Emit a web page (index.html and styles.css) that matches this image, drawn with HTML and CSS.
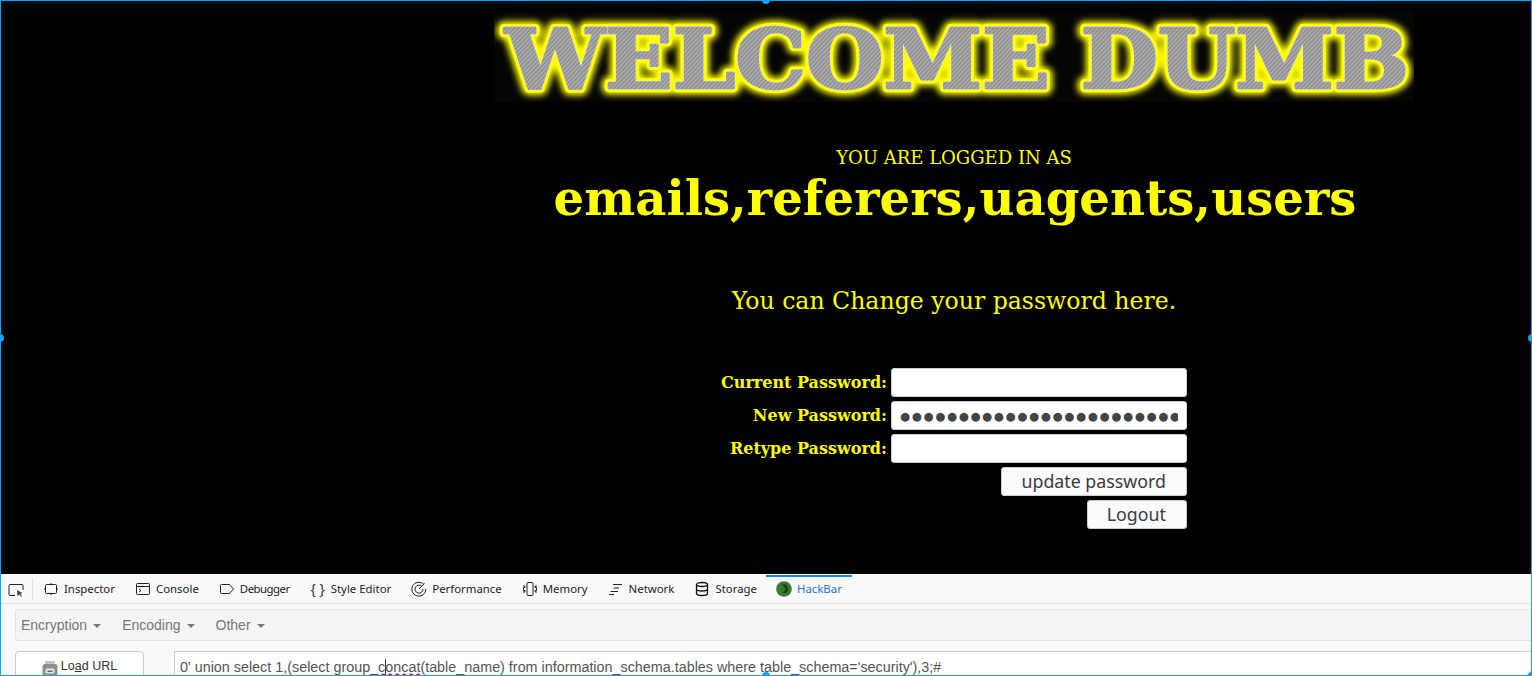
FILE: index.html
```html
<!DOCTYPE html>
<html lang="en">
<head>
<meta charset="UTF-8" />
<meta name="viewport" content="width=device-width, initial-scale=1" />
<title>Less-24 Welcome</title>
<link rel="stylesheet" href="styles.css">
</head>
<body>
<main class="page">
  <div class="content">
    <svg class="banner" width="920" height="110" viewBox="0 0 920 110">
      <defs>
        <pattern id="brushed" width="3" height="3" patternUnits="userSpaceOnUse" patternTransform="rotate(-45)">
          <rect width="3" height="3" fill="#9e9e9e" />
          <rect width="3" height="1" fill="#b2b2b2" />
          <rect y="2" width="3" height="1" fill="#8a8a8a" />
        </pattern>
        <filter id="glow" x="-5%" y="-30%" width="110%" height="160%">
          <feGaussianBlur stdDeviation="3" />
        </filter>
      </defs>
      <rect y="10" width="920" height="90" fill="#050505" />
      <g transform="translate(11 86) scale(1 1.050)">
        <text class="banner-text banner-glow" textLength="904" lengthAdjust="spacingAndGlyphs" filter="url(#glow)">WELCOME DUMB</text>
        <text class="banner-text banner-edge" textLength="904" lengthAdjust="spacingAndGlyphs">WELCOME DUMB</text>
        <text class="banner-text banner-line" textLength="904" lengthAdjust="spacingAndGlyphs">WELCOME DUMB</text>
        <text class="banner-text banner-fill" textLength="904" lengthAdjust="spacingAndGlyphs">WELCOME DUMB</text>
      </g>
    </svg>

    <p class="logged-in">YOU ARE LOGGED IN AS</p>
    <p class="username">emails,referers,uagents,users</p>
    <p class="change-note">You can Change your password here.</p>

    <form class="pass-form">
      <label class="pass-label" for="current">Current Password:</label>
      <input class="pass-input" id="current" type="password">
      <label class="pass-label" for="newpass">New Password:</label>
      <input class="pass-input input-dots" id="newpass" type="text" value="●●●●●●●●●●●●●●●●●●●●●●●●●●●●●●●●●●●●">
      <label class="pass-label" for="retype">Retype Password:</label>
      <input class="pass-input" id="retype" type="password">
      <input class="pass-btn" type="button" value="update password">
      <input class="pass-btn" type="button" value="Logout">
    </form>
  </div>
</main>

<section class="devtools">
  <div class="tabs">
    <span class="picker">
      <svg width="16" height="16" viewBox="0 0 16 16" fill="none" stroke="#222" stroke-width="1">
        <path d="M7 13.500H2a1 1 0 0 1-1-1v-9a1 1 0 0 1 1-1h12a1 1 0 0 1 1 1V8" />
        <path d="M9 8l5.500 3-2.200.8 1.800 2.200-1 .8-1.700-2.200L9.500 14z" fill="#444" stroke="none" />
      </svg>
    </span>
    <span class="tab-sep"></span>
    <span class="tab">
      <svg width="16" height="16" viewBox="0 0 16 16" fill="none" stroke="#222"><rect x="2.500" y="3.500" width="11" height="9" rx="1" /><path d="M1 8h1.500M13.500 8H15M8 2v1.500M8 12.500V14" /></svg>
      Inspector
    </span>
    <span class="tab">
      <svg width="16" height="16" viewBox="0 0 16 16" fill="none" stroke="#222"><rect x="1.500" y="2.500" width="13" height="11" rx="1" /><path d="M1.500 5.500h13M4 8l2 1.500L4 11" /></svg>
      Console
    </span>
    <span class="tab tab-tight">
      <svg width="16" height="16" viewBox="0 0 16 16" fill="none" stroke="#222"><path d="M2.500 3.500h8l4 4.500-4 4.500h-8a1 1 0 0 1-1-1v-7a1 1 0 0 1 1-1z" /></svg>
      Debugger
    </span>
    <span class="tab">
      <span class="braces">{ }</span>
      Style Editor
    </span>
    <span class="tab">
      <svg width="16" height="16" viewBox="0 0 16 16" fill="none" stroke="#222"><path d="M13 3.500A7 7 0 1 0 14.800 8" /><path d="M11 5.500A4 4 0 1 0 12 8" /><path d="M8 8l5.500-5.500" /></svg>
      Performance
    </span>
    <span class="tab">
      <svg width="16" height="16" viewBox="0 0 16 16" fill="none" stroke="#222"><rect x="5" y="1.500" width="6" height="13" rx="1" /><path d="M1 5h2v1.500H1.500v3H3V11H1M15 5h-2v1.500h1.500v3H13V11h2" /></svg>
      Memory
    </span>
    <span class="tab">
      <svg width="16" height="16" viewBox="0 0 16 16" fill="none" stroke="#222"><path d="M5 3.500h9M5.500 7H11M2.500 10.500H10M1 13.500h5" /></svg>
      Network
    </span>
    <span class="tab">
      <svg width="16" height="16" viewBox="0 0 16 16" fill="none" stroke="#111" stroke-width="1.300"><ellipse cx="8" cy="3.500" rx="5.500" ry="2" /><path d="M2.500 3.500v9c0 1.100 2.400 2 5.500 2s5.500-.9 5.500-2v-9M2.500 8c0 1.100 2.400 2 5.500 2s5.500-.9 5.500-2" /></svg>
      Storage
    </span>
    <span class="tab tab-active">
      <svg width="16" height="16" viewBox="0 0 16 16"><circle cx="8" cy="8" r="7.800" fill="#3a7a30" /><path d="M5 4c3.500-2 7 0 7 4s-4 5-6 3c2.500 0 3.500-1.500 3.500-3S7.500 4.500 5 4z" fill="#1b3a14" /></svg>
      HackBar
    </span>
  </div>

  <div class="hackbar">
    <div class="menu-row">
      <span class="menu-item">Encryption</span>
      <span class="menu-item">Encoding</span>
      <span class="menu-item">Other</span>
    </div>
    <div class="url-row">
      <button class="load-btn" type="button">
        <svg class="load-icon" width="16" height="16" viewBox="0 0 16 16"><rect x="3" y="0" width="10" height="5" rx="1" fill="#c4c4c4" /><rect x="0.500" y="3" width="15" height="12" rx="2.500" fill="#8e8e8e" /><rect x="3.500" y="7.500" width="9" height="5" rx="1.500" fill="#e6e6e6" /><rect x="5.500" y="9.500" width="5" height="1.500" fill="#666" /></svg>
        <span>Lo<u>a</u>d URL</span>
      </button>
      <div class="url-box">0' union select 1,(select group_<span class="typo">c<span class="caret"></span>oncat</span>(table_name) from information_schema.tables where table_schema='security'),3;#</div>
    </div>
  </div>
</section>

<div class="frame">
  <span class="handle handle-top"></span>
  <span class="handle handle-left"></span>
  <span class="handle handle-right"></span>
  <span class="handle handle-bottom"></span>
  <span class="corner"></span>
</div>
</body>
</html>
```

FILE: styles.css
```css
html, body {
  margin: 0;
  height: 100%;
  overflow: hidden;
}
body {
  display: flex;
  flex-direction: column;
  background: #000;
  font-family: "DejaVu Serif", serif;
}

/* Page content */
.page {
  height: 574px;
  flex-shrink: 0;
  background: #000;
  color: #ff0;
  overflow: hidden;
}
.content {
  width: 920px;
  margin-left: 494px;
  padding-top: 2px;
  display: flex;
  flex-direction: column;
  align-items: center;
}
.banner {
  display: block;
}
.banner-text {
  font-family: "DejaVu Serif", serif;
  font-weight: bold;
  font-size: 78px;
  stroke-linejoin: round;
}
.banner-glow {
  fill: #ff0;
  stroke: #ff0;
  stroke-width: 13px;
}
.banner-edge {
  fill: #ff0;
  stroke: #ff0;
  stroke-width: 8px;
}
.banner-line {
  fill: #ddd;
  stroke: #e6e6d8;
  stroke-width: 3.500px;
}
.banner-fill {
  fill: url(#brushed);
  stroke: url(#brushed);
  stroke-width: 2.500px;
}
.logged-in {
  margin: 34px 0 0;
  font-size: 18px;
  line-height: 24px;
}
.username {
  margin: 0;
  padding-left: 2px;
  font-size: 48.160px;
  font-weight: bold;
  line-height: 57px;
}
.change-note {
  margin: 58px 0 0;
  font-size: 23.600px;
  line-height: 32px;
}

/* Password form */
.pass-form {
  margin-top: 51px;
  display: grid;
  grid-template-columns: auto 296px;
  column-gap: 4px;
  row-gap: 4px;
  align-items: center;
  justify-items: end;
}
.pass-label {
  font-size: 16px;
  font-weight: bold;
}
.pass-input {
  box-sizing: border-box;
  width: 296px;
  height: 29px;
  padding: 0 8px;
  border: 1px solid #c8cdd6;
  border-radius: 3px;
  background: #fff;
  color: #444;
  font-size: 16px;
}
.input-dots {
  font-family: "DejaVu Sans", sans-serif;
  font-size: 11.500px;
  letter-spacing: 1.700px;
}
.pass-btn {
  grid-column: 1 / 3;
  box-sizing: border-box;
  height: 29px;
  padding: 0 20px 2px 19px;
  border: 1px solid #c8cdd6;
  border-radius: 3px;
  background: #fbfbfb;
  color: #3a3a44;
  font-family: "Noto Sans", sans-serif;
  font-size: 17.800px;
}

/* Devtools */
.devtools {
  flex: 1;
  background: #f9f9fa;
  overflow: hidden;
  font-family: "Noto Sans", sans-serif;
}
.tabs {
  height: 29px;
  display: flex;
  align-items: stretch;
  border-bottom: 1px solid #e0e0e2;
  color: #222;
  font-size: 11.400px;
}
.picker {
  width: 32px;
  display: flex;
  align-items: center;
  justify-content: center;
  padding-top: 2px;
}
.tab-sep {
  width: 1px;
  height: 22px;
  align-self: center;
  background: #e0e0e2;
}
.tab {
  display: flex;
  align-items: center;
  gap: 5px;
  padding: 0 10px;
}
.tab svg {
  flex-shrink: 0;
}
.tab-tight {
  letter-spacing: -0.500px;
}
.braces {
  width: 16px;
  text-align: center;
  font-size: 14px;
  line-height: 14px;
  color: #333;
}
.tab-active {
  color: #1f6fe5;
  border-top: 2px solid #0a84ff;
  margin-top: 1px;
  margin-left: -1px;
  padding-bottom: 3px;
}
.hackbar {
  padding: 5px 0 0 15px;
  font-family: "Liberation Sans", sans-serif;
}
.menu-row {
  height: 30px;
  display: flex;
  align-items: center;
  gap: 21px;
  padding-left: 5px;
  border: 1px solid #e3e3e3;
  border-right: none;
  border-radius: 4px 0 0 4px;
  background: #f5f5f5;
  color: #777;
  font-size: 14px;
}
.menu-item::after {
  content: "";
  display: inline-block;
  margin-left: 6px;
  vertical-align: middle;
  border-top: 4px solid #777;
  border-left: 4px solid transparent;
  border-right: 4px solid transparent;
}
.url-row {
  margin-top: 10px;
  display: flex;
  gap: 30px;
}
.load-btn {
  width: 129px;
  height: 34px;
  flex-shrink: 0;
  display: flex;
  align-items: flex-start;
  justify-content: center;
  gap: 3px;
  padding: 7px 0 0;
  border: 1px solid #ccc;
  border-radius: 4px;
  background: #fff;
  color: #333;
  font-family: "Liberation Sans", sans-serif;
  font-size: 12.500px;
}
.load-icon {
  margin-top: 2px;
}
.url-box {
  flex: 1;
  height: 34px;
  box-sizing: border-box;
  padding: 7px 5px;
  border: 1px solid #ccc;
  border-right: none;
  background: #fff;
  color: #555;
  font-size: 14.350px;
  white-space: nowrap;
}
.typo {
  position: relative;
  text-decoration: underline wavy #e00;
}
.caret {
  position: absolute;
  top: 0;
  width: 1px;
  height: 17px;
  background: #333;
}

/* Selection frame round the window */
.frame {
  position: fixed;
  inset: 0;
  border: 1px solid #0aa5f5;
  pointer-events: none;
}
.handle {
  position: absolute;
  width: 8px;
  height: 8px;
  border-radius: 50%;
  background: #0aa5f5;
}
.handle-top { top: -5px; left: 761px; }
.handle-bottom { bottom: -5px; left: 761px; }
.handle-left { left: -5px; top: 333px; }
.handle-right { right: -5px; top: 333px; }
.corner {
  position: absolute;
  right: 0;
  bottom: 0;
  width: 4px;
  height: 4px;
  background: #0aa5f5;
  clip-path: polygon(100% 0, 100% 100%, 0 100%);
}
```
